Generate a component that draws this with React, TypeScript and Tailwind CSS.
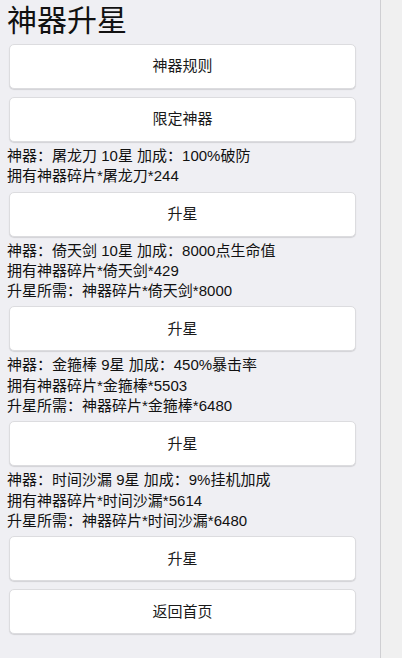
import React from 'react';

type Artifact = {
  name: string;
  star: number;
  bonus: string;
  owned: number;
  need?: number;
};

const artifacts: Artifact[] = [
  { name: '屠龙刀', star: 10, bonus: '100%破防', owned: 244 },
  { name: '倚天剑', star: 10, bonus: '8000点生命值', owned: 429, need: 8000 },
  { name: '金箍棒', star: 9, bonus: '450%暴击率', owned: 5503, need: 6480 },
  { name: '时间沙漏', star: 9, bonus: '9%挂机加成', owned: 5614, need: 6480 },
];

const Btn = ({ label }: { label: string }) => (
  <button className="ml-[2px] w-[347px] h-[45px] bg-white rounded-[5px] border border-[#dcdcdf] shadow-[0_1px_1px_rgba(0,0,0,0.12)] text-[15px] text-[#1a1a1a] flex items-center justify-center">
    {label}
  </button>
);

export default function App() {
  return (
    <div
      className="w-[402px] h-[658px] flex bg-[#f0f0f0] overflow-hidden"
      style={{ fontFamily: '"Liberation Sans", "Noto Sans CJK SC", sans-serif' }}
    >
      <div className="w-[381px] h-full bg-[#efeff3] border-r border-[#cfcfd2] pl-[7px] pt-[3px]">
        <h1 className="text-[30px] leading-[36px] text-[#111] font-normal">神器升星</h1>
        <div className="mt-[5px] flex flex-col gap-[8px]">
          <Btn label="神器规则" />
          <Btn label="限定神器" />
        </div>
        {artifacts.map((a) => (
          <div key={a.name}>
            <div className="pt-[4px] pb-[5px] text-[15px] leading-[20.3px] text-[#111]">
              <div>
                神器：{a.name} {a.star}星 加成：{a.bonus}
              </div>
              <div>
                拥有神器碎片*{a.name}*{a.owned}
              </div>
              {a.need !== undefined && (
                <div>
                  升星所需：神器碎片*{a.name}*{a.need}
                </div>
              )}
            </div>
            <Btn label="升星" />
          </div>
        ))}
        <div className="mt-[8px]">
          <Btn label="返回首页" />
        </div>
      </div>
    </div>
  );
}
